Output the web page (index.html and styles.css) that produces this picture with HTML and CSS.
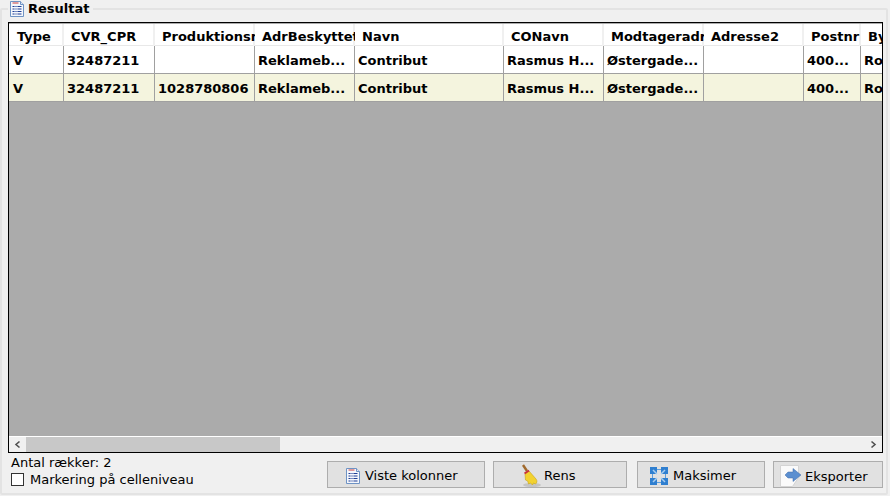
FILE: index.html
```html
<!DOCTYPE html>
<html lang="da">
<head>
<meta charset="utf-8">
<title>Resultat</title>
<link rel="stylesheet" href="styles.css">
</head>
<body>
<svg class="defs" width="0" height="0" aria-hidden="true">
  <symbol id="sheet" viewBox="0 0 16 16">
    <path d="M1.500.5h10l3 3v12h-13z" fill="#f4f7fc" stroke="#6f93c4"/>
    <path d="M11.500.5v3h3" fill="#dfe8f5" stroke="#6f93c4"/>
    <path d="M3.500 2h6" stroke="#c83c3c" fill="none"/>
    <path d="M3.500 5h9v1h-9zM3.500 7.500h9v1h-9zM3.500 10h9v1h-9zM3.500 12.500h9v1h-9z" fill="#1f3f96"/>
    <path d="M6 5v9M8 5v9" stroke="#f4f7fc" fill="none" stroke-width=".8"/>
  </symbol>
</svg>
<main class="panel">
  <header class="legend">
    <svg class="legend-icon" width="16" height="16"><use href="#sheet"/></svg>
    <span>Resultat</span>
  </header>
  <section class="grid-box">
    <div class="grid-view">
      <table class="grid">
        <colgroup>
          <col class="c-type"><col class="c-cvr"><col class="c-prod"><col class="c-adr">
          <col class="c-navn"><col class="c-con"><col class="c-mod"><col class="c-ad2">
          <col class="c-post"><col class="c-by">
        </colgroup>
        <thead>
          <tr>
            <th>Type</th><th>CVR_CPR</th><th>Produktionsnr</th><th>AdrBeskyttet</th>
            <th>Navn</th><th>CONavn</th><th>Modtageradr</th><th>Adresse2</th>
            <th>Postnr</th><th>By</th>
          </tr>
        </thead>
        <tbody>
          <tr>
            <td>V</td><td>32487211</td><td></td><td>Reklameb...</td>
            <td>Contribut</td><td>Rasmus H...</td><td>Østergade...</td><td></td>
            <td>400...</td><td>Ro</td>
          </tr>
          <tr class="selected">
            <td>V</td><td>32487211</td><td>1028780806</td><td>Reklameb...</td>
            <td>Contribut</td><td>Rasmus H...</td><td>Østergade...</td><td></td>
            <td>400...</td><td>Ro</td>
          </tr>
        </tbody>
      </table>
    </div>
    <div class="scrollbar">
      <svg class="arrow" width="17" height="15" viewBox="0 0 17 15"><path d="M10.500 4.500 7 7.500l3.500 3" fill="none" stroke="#505050" stroke-width="1.600"/></svg>
      <div class="track"><div class="thumb"></div></div>
      <svg class="arrow" width="17" height="15" viewBox="0 0 17 15"><path d="M6.500 4.500 10 7.500l-3.500 3" fill="none" stroke="#505050" stroke-width="1.600"/></svg>
    </div>
  </section>
  <footer class="footer">
    <div class="status">
      <div class="count">Antal rækker: 2</div>
      <label class="check"><span class="box"></span>Markering på celleniveau</label>
    </div>
    <div class="buttons">
      <button class="btn b-viste"><svg width="16" height="16"><use href="#sheet"/></svg>Viste kolonner</button>
      <button class="btn b-rens">
        <svg width="22" height="24" viewBox="0 0 22 24">
          <ellipse cx="12" cy="21" rx="9" ry="2" fill="#c4c4c4"/>
          <path d="M3 1l4 6" stroke="#a0692c" stroke-width="2.400" fill="none"/>
          <path d="M5 10l4-3 7 8c1.500 2 1 4-.5 5l-2-1-1 2-2-2-2 1-.8-3-2.200-1z" fill="#f2d230" stroke="#c9a415" stroke-width=".6"/>
          <path d="M4.500 9.500l4.500-3" stroke="#c8323c" stroke-width="2" fill="none"/>
        </svg>Rens</button>
      <button class="btn b-maks">
        <svg width="18" height="18" viewBox="0 0 18 18">
          <path d="M0 0h7v7H0zM11 0h7v7h-7zM0 11h7v7H0zM11 11h7v7h-7z" fill="#2f7fd0"/>
          <path d="M7 2h4v1H7zM7 15h4v1H7zM2 7h1v4H2zM15 7h1v4h-1z" fill="#5f9fdc"/>
          <path d="M3 3l4 4M15 3l-4 4M3 15l4-4M15 15l-4-4" stroke="#a9cdee" stroke-width="1.500"/>
        </svg>Maksimer</button>
      <button class="btn b-eksp">
        <svg width="23" height="22" viewBox="0 0 23 22">
          <path d="M.5.500h18v12l-6 9H.5z" fill="#fafafa" stroke="#d4d4d4"/>
          <path d="M8 7h5V3.500l8 6.500-8 6.500V13H8l-3-3z" fill="#5b8fd0" stroke="#3f6ba8" stroke-width=".5"/>
        </svg>Eksporter</button>
    </div>
  </footer>
</main>
</body>
</html>
```

FILE: styles.css
```css
* { box-sizing: border-box; }
html, body { margin: 0; height: 100%; }
body {
  background: #f0f0f0;
  font-family: "DejaVu Sans", Verdana, sans-serif;
  font-size: 13px;
  color: #000;
  overflow: hidden;
}
.defs { position: absolute; }
.panel {
  position: relative;
  width: 888px;
  height: 495px;
  padding: 22px 5px 0 8px;
}
.panel::before {
  content: "";
  position: absolute;
  left: 0; right: 0; top: 8px; bottom: 0;
  border: 2px solid #e3e3e3;
  border-radius: 2px;
}
.legend {
  position: absolute;
  left: 8px; top: 1px;
  display: flex;
  align-items: center;
  gap: 3px;
  height: 16px;
  padding: 0 4px 0 1px;
  background: #f0f0f0;
  font-weight: bold;
  line-height: 16px;
}
.legend-icon { display: block; }
.grid-box {
  position: relative;
  width: 875px;
  height: 431px;
  border: 1px solid #000;
  background: #ababab;
  display: flex;
  flex-direction: column;
  padding-top: 1px;
}
.grid-view { flex: 1; overflow: hidden; }
.grid {
  table-layout: fixed;
  border-collapse: separate;
  border-spacing: 0;
  width: 873px;
  font-weight: bold;
}
.c-type { width: 55px; }
.c-cvr { width: 91px; }
.c-prod { width: 100px; }
.c-adr { width: 100px; }
.c-navn { width: 149px; }
.c-con { width: 100px; }
.c-mod { width: 100px; }
.c-ad2 { width: 100px; }
.c-post { width: 57px; }
.c-by { width: 21px; }
.grid th {
  height: 22px;
  padding: 2px 0 0 8px;
  background: #fff;
  box-shadow: inset -2px 0 #f0f0f0, inset 0 -1px #e8e8e8;
  font-weight: bold;
  text-align: left;
  overflow: hidden;
  white-space: nowrap;
}
.grid th + th { padding-left: 7px; }
.grid td {
  height: 28px;
  padding: 2px 0 0 4px;
  background: #fff;
  border-right: 1px solid #a0a0a0;
  border-bottom: 1px solid #a0a0a0;
  overflow: hidden;
  white-space: nowrap;
}
.grid td + td { padding-left: 3px; }
.grid th:last-child { box-shadow: inset 0 -1px #e8e8e8; }
.grid td:last-child { border-right: 0; }
.grid .selected td { background: #f4f4de; }
.scrollbar {
  display: flex;
  height: 16px;
  background: #f0f0f0;
  border-top: 1px solid #fff;
}
.arrow { display: block; flex: none; }
.track { flex: 1; background: #f0f0f0; }
.thumb { width: 254px; height: 100%; background: #c8c8c8; }
.footer {
  display: flex;
  justify-content: space-between;
  height: 42px;
  padding-left: 3px;
}
.status { padding-top: 2px; line-height: 16px; }
.count { height: 16px; }
.check { display: flex; align-items: center; gap: 6px; height: 17px; }
.box {
  width: 13px; height: 13px;
  border: 1px solid #333;
  background: #fff;
}
.buttons {
  display: flex;
  gap: 8px;
  padding: 8px 0 0;
}
.btn {
  display: flex;
  align-items: center;
  height: 27px;
  padding: 2px 0 0;
  background: #e1e1e1;
  border: 1px solid #adadad;
  border-radius: 0;
  font: inherit;
  color: #000;
}
.btn svg { display: block; flex: none; }
.b-viste { width: 158px; gap: 4px; padding-left: 17px; }
.b-rens { width: 134px; gap: 2px; padding-left: 26px; margin-right: 2px; }
.b-maks { width: 128px; gap: 5px; padding-left: 12px; }
.b-eksp { width: 110px; gap: 2px; padding-left: 6px; padding-top: 3px; }
```
